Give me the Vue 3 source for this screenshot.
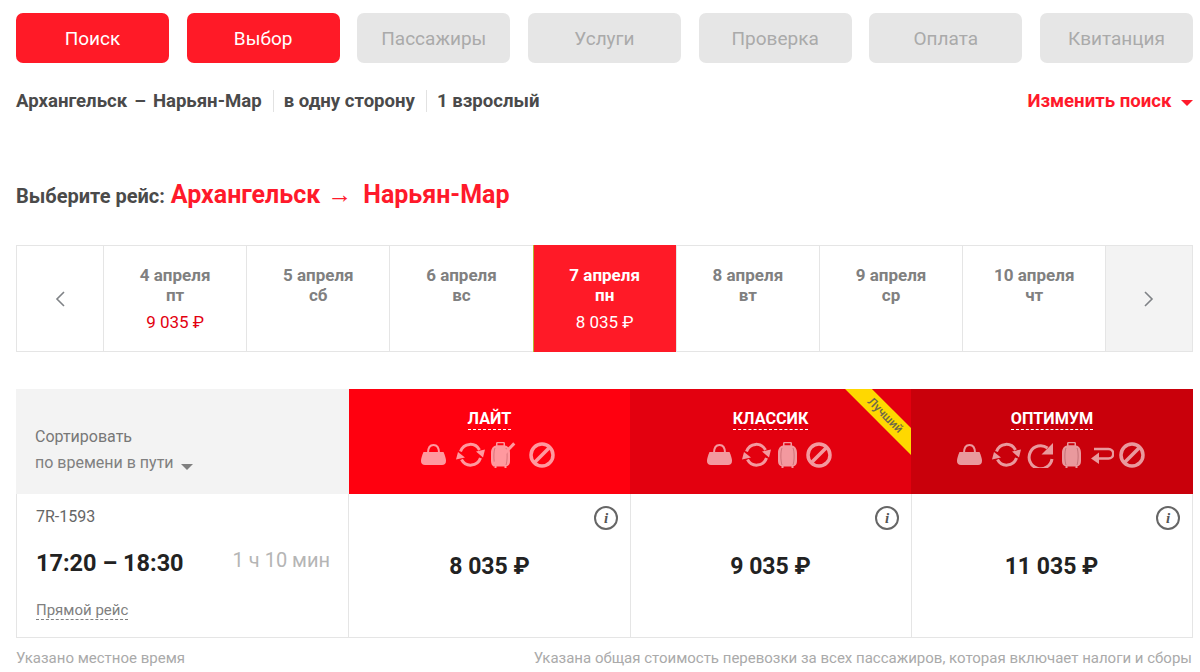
<template>
  <div class="page">
    <svg class="defs" width="0" height="0">
      <symbol id="bag" viewBox="0 0 25 21">
        <path fill="#fff" d="M2.500 8H22.500C24 11.500 25 14.500 25 17C25 19.500 23.500 21 21 21H4C1.500 21 0 19.500 0 17C0 14.500 1 11.500 2.500 8Z"/>
        <path fill="none" stroke="#fff" stroke-width="2" d="M7 9C7 3.500 9.500 1 12.500 1C15.500 1 18 3.500 18 9"/>
      </symbol>
      <symbol id="sync" viewBox="0 0 29 27">
        <g fill="none" stroke="#fff" stroke-width="3">
          <path d="M4.500 10.500A10.500 11 0 0 1 23.500 9"/>
          <path d="M24.500 17A10.500 11 0 0 1 5.500 18.500"/>
        </g>
        <path fill="#fff" d="M20 10.500L29 8.500L27 16.500ZM0 18.500L2 11L9 16.500Z"/>
      </symbol>
      <symbol id="case" viewBox="0 0 19 26">
        <path fill="#fff" d="M5 3.600V1.500C5 .5 5.500 0 6.500 0H12.500C13.500 0 14 .5 14 1.500V3.600C17 4 19 7 19 11V19C19 22.500 17.500 24 15.500 24.300V26H13.500V24.500H5.500V26H3.500V24.300C1.500 24 0 22.500 0 19V11C0 7 2 4 5 3.600ZM6.500 1.300V3.300H12.500V1.300Z"/>
        <path fill="none" stroke="#000" stroke-opacity=".25" d="M4 6C2.500 9 2.500 19 4 23M15 6C16.500 9 16.500 19 15 23"/>
      </symbol>
      <symbol id="ban" viewBox="0 0 26 26">
        <circle cx="13" cy="13" r="11" fill="none" stroke="#fff" stroke-width="3.500"/>
        <path stroke="#fff" stroke-width="3.500" d="M5.500 20.500L20.500 5.500"/>
      </symbol>
      <symbol id="redo" viewBox="0 0 27 26">
        <path fill="none" stroke="#fff" stroke-width="3" d="M25 17A11.500 11.500 0 1 1 20.500 6"/>
        <path fill="#fff" d="M26 1V12.500H14.500Z"/>
      </symbol>
      <symbol id="ret" viewBox="0 0 23 18">
        <path fill="none" stroke="#fff" stroke-width="2.500" d="M3 3H17.500A4.500 4.500 0 0 1 17.500 12.500H7"/>
        <path fill="#fff" d="M0 12.500L8 6.500V18Z"/>
      </symbol>
    </svg>

    <nav class="steps">
      <div v-for="s in steps" :key="s.name" class="step" :class="{ on: s.on }">{{ s.name }}</div>
    </nav>

    <div class="summary">
      <span class="sum-item">Архангельск<span class="dash">–</span>Нарьян-Мар</span>
      <span class="sum-item">в одну сторону</span>
      <span class="sum-item">1 взрослый</span>
      <a class="change">Изменить поиск <i class="tri"></i></a>
    </div>

    <h2 class="choose">
      Выберите рейс:
      <span class="route">Архангельск<span class="arrow">→</span>Нарьян-Мар</span>
    </h2>

    <div class="dates">
      <div class="arr">
        <svg width="12" height="18" viewBox="0 0 12 18"><path d="M10 2L3 9L10 16" fill="none" stroke="#7f8286" stroke-width="1.600"/></svg>
      </div>
      <div v-for="d in dates" :key="d.day" class="date" :class="{ active: d.active }">
        <div class="day">{{ d.day }}</div>
        <div class="day">{{ d.week }}</div>
        <div v-if="d.price" class="dprice">{{ d.price }}</div>
      </div>
      <div class="arr next">
        <svg width="12" height="18" viewBox="0 0 12 18"><path d="M2 2L9 9L2 16" fill="none" stroke="#7f8286" stroke-width="1.600"/></svg>
      </div>
    </div>

    <div class="table">
      <div class="sort">
        <div class="sort-t">Сортировать</div>
        <div class="sort-v">по времени в пути <i class="tri gray"></i></div>
      </div>
      <div v-for="t in tariffs" :key="t.name" class="tariff" :class="t.cls">
        <div v-if="t.best" class="ribbon">Лучший</div>
        <div class="t-name">{{ t.name }}</div>
        <div class="t-icons">
          <span v-for="(ic, i) in t.icons" :key="i" class="t-icon" :style="{ marginRight: ic.mr + 'px' }">
            <svg :width="ic.w" :height="ic.h"><use :href="'#' + ic.id" /></svg>
            <i v-if="ic.off" class="slash"></i>
          </span>
        </div>
      </div>

      <div class="flight">
        <div class="fnum">7R-1593</div>
        <div class="ftime">
          <span class="time">17:20 – 18:30</span>
          <span class="dur">1 ч 10 мин</span>
        </div>
        <div><span class="direct">Прямой рейс</span></div>
      </div>
      <div v-for="t in tariffs" :key="t.price" class="price-cell">
        <span class="info">i</span>
        <span class="price">{{ t.price }}</span>
      </div>
    </div>

    <div class="notes">
      <span>Указано местное время</span>
      <span>Указана общая стоимость перевозки за всех пассажиров, которая включает налоги и сборы</span>
    </div>
  </div>
</template>

<script setup>
const steps = [
  { name: 'Поиск', on: true },
  { name: 'Выбор', on: true },
  { name: 'Пассажиры' },
  { name: 'Услуги' },
  { name: 'Проверка' },
  { name: 'Оплата' },
  { name: 'Квитанция' }
]

const dates = [
  { day: '4 апреля', week: 'пт', price: '9 035 ₽' },
  { day: '5 апреля', week: 'сб' },
  { day: '6 апреля', week: 'вс' },
  { day: '7 апреля', week: 'пн', price: '8 035 ₽', active: true },
  { day: '8 апреля', week: 'вт' },
  { day: '9 апреля', week: 'ср' },
  { day: '10 апреля', week: 'чт' }
]

const bag = { id: 'bag', w: 25, h: 21, mr: 10 }
const sync = { id: 'sync', w: 29, h: 27, mr: 6 }
const suitcase = { id: 'case', w: 19, h: 26, mr: 9 }
const ban = { id: 'ban', w: 26, h: 26, mr: 3 }

const tariffs = [
  { name: 'ЛАЙТ', cls: 'lite', price: '8 035 ₽', icons: [bag, sync, { ...suitcase, mr: 19, off: true }, ban] },
  { name: 'КЛАССИК', cls: 'classic', price: '9 035 ₽', best: true, icons: [bag, { ...sync, mr: 7 }, suitcase, ban] },
  {
    name: 'ОПТИМУМ', cls: 'optimum', price: '11 035 ₽',
    icons: [bag, sync, { id: 'redo', w: 27, h: 26, mr: 8 }, { ...suitcase, mr: 10 }, { id: 'ret', w: 23, h: 18, mr: 5 }, ban]
  }
]
</script>

<style>
html, body { background: #fff; overflow: hidden; }
</style>

<style scoped>
.page {
  width: 1177px; height: 672px; padding: 13px 0 0 16px; overflow: hidden;
  font-family: Roboto, "Liberation Sans", sans-serif; color: #4a4a4a;
}
.defs { position: absolute; }

.steps { display: flex; justify-content: space-between; }
.step {
  width: 153px; height: 50px; border-radius: 7px; background: #e6e6e6; color: #aaa;
  font-size: 19px; line-height: 52px; text-align: center;
}
.step.on { background: #ff1a27; color: #fff; }

.summary {
  display: flex; align-items: center; height: 22px; margin-top: 27px;
  font-size: 18.6px; font-weight: 700;
}
.sum-item { padding: 0 11px 0 10px; border-left: 1px solid #e2e2e2; line-height: 22px; }
.sum-item:first-child { padding-left: 0; border-left: 0; }
.dash { margin: 0 7px; }
.change { margin-left: auto; color: #ff1a2b; }
.tri {
  display: inline-block; width: 0; height: 0; margin-left: 5px; vertical-align: 1px;
  border: 6px solid transparent; border-top: 6px solid #ff1a2b; border-bottom: 0;
}
.tri.gray { border-top-color: #808080; vertical-align: -2px; margin-left: 3px; }

.choose { margin: 66px 0 0; height: 32px; font-size: 20px; font-weight: 700; line-height: 32px; }
.route { margin-left: 1px; font-size: 25px; font-weight: 700; color: #ff1a2b; }
.arrow { margin: 0 11px 0 7px; font-family: "Liberation Sans", sans-serif; }

.dates {
  display: grid; grid-template-columns: 86px repeat(7, 143.2px) 1fr;
  height: 107px; margin-top: 35px; box-sizing: border-box;
  border: 1px solid #e5e5e5;
}
.arr { display: flex; align-items: center; justify-content: center; }
.arr.next { background: #f3f3f3; border-left: 1px solid #e5e5e5; }
.date {
  border-left: 1px solid #e5e5e5; padding-top: 19px; text-align: center;
  color: #808080; font-size: 17px; font-weight: 700; line-height: 20px;
}
.date.active { background: #ff1a27; color: #fff; margin: -1px 0; padding-top: 20px; border-left: 1px solid #b7b52f; }
.dprice { margin-top: 7px; font-size: 17px; font-weight: 400; color: #e3000f; }
.date.active .dprice { color: #fff; }

.table {
  display: grid; grid-template-columns: 333px 281px 281px 282px; grid-template-rows: 105px 144px;
  margin-top: 37px;
}
.sort { background: #f3f3f3; padding: 38px 0 0 19px; font-size: 16px; color: #777; }
.sort-t { line-height: 20px; }
.sort-v { margin-top: 6px; line-height: 20px; color: #808080; }

.tariff { position: relative; overflow: hidden; text-align: center; color: #fff; padding-top: 20px; box-sizing: border-box; }
.lite { background: #ff000f; }
.classic { background: #e3000f; }
.optimum { background: #c9000b; }
.t-name {
  display: inline-block; font-size: 16.2px; font-weight: 700; line-height: 20px;
  border-bottom: 1px dashed #fff;
}
.t-icons { display: flex; justify-content: center; align-items: center; height: 27px; margin-top: 11px; }
.t-icon { position: relative; display: flex; opacity: .6; }
.slash {
  position: absolute; left: -3px; top: 11px; width: 31px; height: 3px;
  background: #fff; transform: rotate(-46deg);
}
.ribbon {
  position: absolute; left: 205px; top: 17px; width: 100px; height: 19px;
  background: #ffd800; color: #6f6a4a; transform: rotate(45deg);
  font-size: 12px; font-weight: 500; line-height: 19px; text-align: center;
}

.flight {
  border: 1px solid #e5e5e5; border-top: 0; padding: 14px 0 0 19px; box-sizing: border-box;
}
.fnum { font-size: 16px; line-height: 18px; color: #666; }
.ftime { display: flex; align-items: center; justify-content: space-between; margin-top: 23px; padding-right: 18px; }
.time { font-size: 23.5px; font-weight: 700; color: #222; line-height: 28px; }
.dur { font-size: 20px; color: #b5b5b5; margin-top: -6px; }
.direct {
  display: inline-block; margin-top: 25px; font-size: 15px; line-height: 17px; color: #808080;
  border-bottom: 1px dashed #808080;
}
.price-cell {
  position: relative; display: flex; align-items: center; justify-content: center;
  border-right: 1px solid #e5e5e5; border-bottom: 1px solid #e5e5e5; box-sizing: border-box;
}
.price-cell:not(:last-child) { margin-right: -1px; }
.info {
  position: absolute; top: 12px; right: 12px; width: 20px; height: 20px; border: 2px solid #666; border-radius: 50%;
  font: italic 700 15px/20px "Liberation Serif", serif; color: #555; text-align: center;
}
.price { font-size: 23px; font-weight: 700; color: #222; margin-top: 1px; }

.notes {
  display: flex; justify-content: space-between; margin-top: 11px; padding-right: 1px;
  font-size: 15px; line-height: 18px; color: #aaa;
}
</style>
